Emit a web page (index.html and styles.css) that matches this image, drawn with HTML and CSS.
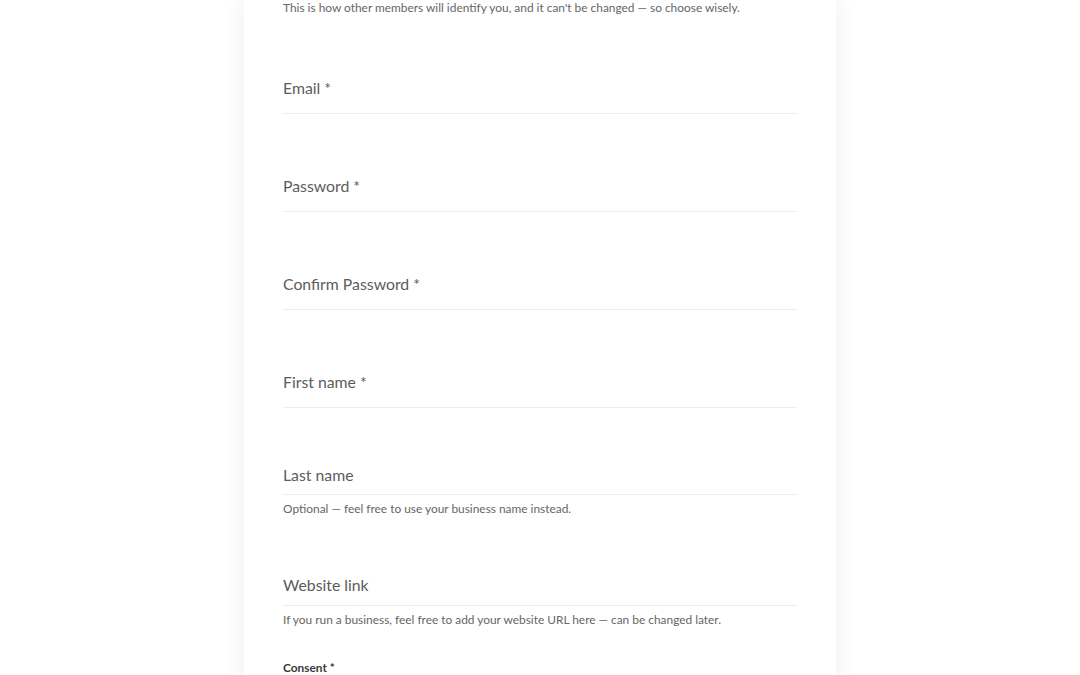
FILE: index.html
```html
<!DOCTYPE html>
<html>
<head>
<meta charset="utf-8">
<link rel="stylesheet" href="styles.css">
</head>
<body>
<div class="page">
  <form class="card">
    <p class="help help-top">This is how other members will identify you, and it can't be changed — so choose wisely.</p>

    <div class="field req first">
      <label class="label">Email *</label>
    </div>
    <div class="field req">
      <label class="label">Password *</label>
    </div>
    <div class="field req">
      <label class="label">Confirm Password *</label>
    </div>
    <div class="field req">
      <label class="label">First name *</label>
    </div>
    <div class="field opt last">
      <label class="label">Last name</label>
    </div>
    <p class="help">Optional — feel free to use your business name instead.</p>
    <div class="field opt web">
      <label class="label">Website link</label>
    </div>
    <p class="help">If you run a business, feel free to add your website URL here — can be changed later.</p>

    <p class="consent">Consent *</p>
  </form>
</div>
</body>
</html>
```

FILE: styles.css
```css
html, body {
  margin: 0;
  padding: 0;
  background: #ffffff;
}

body {
  font-family: "Lato", "Noto Sans", sans-serif;
  color: #5b5b5b;
  overflow: hidden;
  height: 675px;
}

.page {
  display: flex;
  justify-content: flex-start;
  padding-left: 244px;
}

.card {
  width: 592px;
  box-sizing: border-box;
  padding: 0 39px 80px 39px;
  background: #ffffff;
  box-shadow: 0 0 22px rgba(0, 0, 0, 0.07);
  min-height: 760px;
}

.help {
  margin: 6px 0 0 0;
  font-size: 11.9px;
  line-height: 16px;
  color: #666666;
}

.help-top {
  margin-top: 0;
}

.field {
  border-bottom: 1px solid #ececec;
  margin-top: 62px;
}

.label {
  display: block;
  font-size: 15.8px;
  line-height: 20px;
  color: #5c5c5c;
}

.field.req .label {
  padding-bottom: 15px;
}

.field.last {
  margin-top: 57px;
}

.field.last .label {
  padding-bottom: 9px;
}

.field.web {
  margin-top: 58px;
}

.field.web .label {
  padding-bottom: 10px;
}

.consent {
  margin: 32px 0 0 0;
  font-size: 11.9px;
  line-height: 16px;
  font-weight: 700;
  color: #3a3a3a;
}
```
